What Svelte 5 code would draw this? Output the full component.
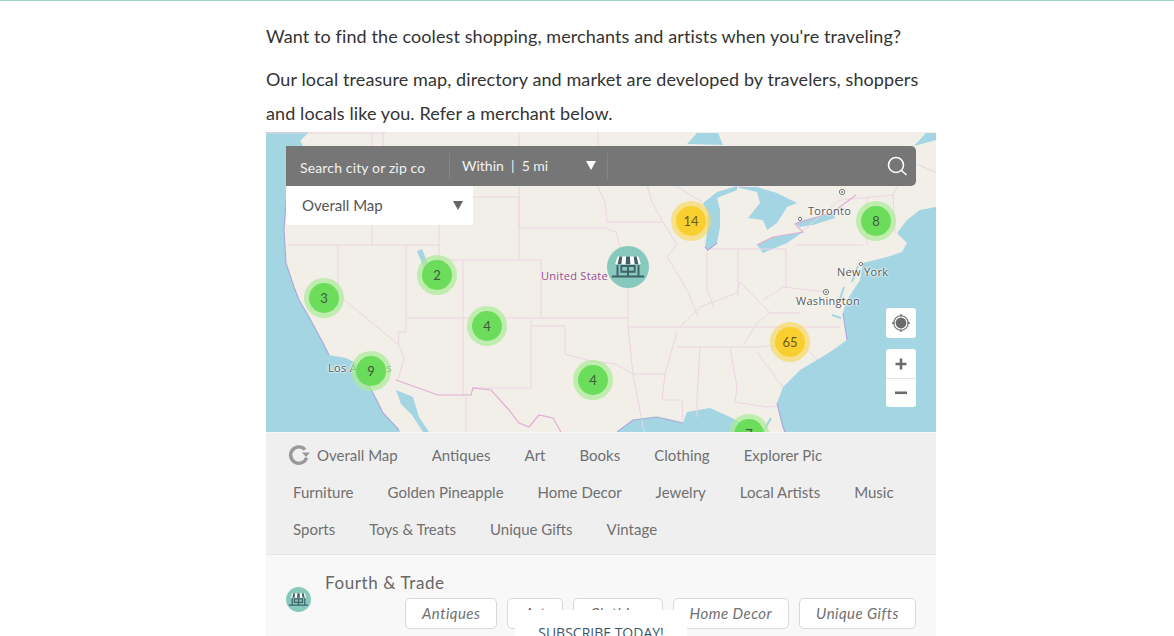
<script>
  const row1 = ['Antiques', 'Art', 'Books', 'Clothing', 'Explorer Pic'];
  const row2 = ['Furniture', 'Golden Pineapple', 'Home Decor', 'Jewelry', 'Local Artists', 'Music'];
  const row3 = ['Sports', 'Toys & Treats', 'Unique Gifts', 'Vintage'];
  const tags = ['Antiques', 'Art', 'Clothing', 'Home Decor', 'Unique Gifts'];
  const clusters = [
    { x: 58, y: 166, n: '3', c: 'g' },
    { x: 171, y: 143, n: '2', c: 'g' },
    { x: 221, y: 194, n: '4', c: 'g' },
    { x: 105, y: 239, n: '9', c: 'g' },
    { x: 327, y: 248, n: '4', c: 'g' },
    { x: 425, y: 89, n: '14', c: 'y' },
    { x: 610, y: 89, n: '8', c: 'g' },
    { x: 524, y: 210, n: '65', c: 'y' },
    { x: 483, y: 302, n: '7', c: 'g' }
  ];
  const labels = [
    { x: 275, y: 137, t: 'United State', k: 'purple' },
    { x: 542, y: 72, t: 'Toronto', k: 'city' },
    { x: 571, y: 133, t: 'New York', k: 'city' },
    { x: 530, y: 162, t: 'Washington', k: 'city' },
    { x: 62, y: 229, t: 'Los Angeles', k: 'city' }
  ];
  const borders = [
    'M0 1 H120', 'M106 0 V113', 'M117 0 V14', 'M22 113 H173', 'M72 113 V163 L133 213 L138 226 L133 245 L130 248',
    'M140 113 V200 H132 L133 213', 'M197 128 V265', 'M173 65 V128 H275 V186', 'M140 186 H362',
    'M265 186 V256 H207', 'M265 194 H299 V222 L320 228 L350 232 L367 242 H399',
    'M150 65 H253 V128', 'M253 0 V96 H340 L350 100 L362 148 V195', 'M332 0 V55 L339 70 L341 90 H397',
    'M339 53 H381 L386 70 L397 90 L411 113 L401 125 L411 141 L422 160 L432 185', 'M200 265 V300',
    'M361 195 H574', 'M411 215 H494', 'M362 195 L367 242 L371 263 L378 300',
    'M411 200 L399 242 L396 268 H416 L417 290', 'M434 215 L431 268 L431 285',
    'M464 216 L471 255 L469 270 L501 275 L512 274', 'M491 220 L517 255', 'M494 215 L534 210 L551 228',
    'M414 195 L424 185 L434 175 L471 161', 'M504 181 L491 191 L477 213', 'M471 161 L474 150 L504 181 L534 181',
    'M497 168 L517 155 L560 160', 'M442 117 H520 V155', 'M441 117 V158 L448 175', 'M472 118 V165',
    'M529 113 H597', 'M601 65 V113', 'M574 68 L627 63 L629 101', 'M534 101 L574 68',
    'M381 55 L395 45 L436 70', 'M472 55 L512 50', 'M627 63 L640 40 L650 20', 'M645 30 L670 40'
  ];
</script>

<div class="page">
  <main class="content">
    <p class="intro first">Want to find the coolest shopping, merchants and artists when you're traveling?</p>
    <p class="intro">Our local treasure map, directory and market are developed by travelers, shoppers and locals like you. Refer a merchant below.</p>

    <section class="map">
      <svg class="base" width="670" height="300" viewBox="0 0 670 300">
        <rect width="670" height="300" fill="#f2efe9" />
        <g fill="#a3d5e3">
          <path d="M0 0 H43 L33 10 L37 22 L25 45 L20 70 L18 98 L20 131 L28 155 L33 168 L43 185 L57 211 L63 223 L80 226 L90 231 L100 248 L107 261 L117 281 L133 298 L134 300 H0 Z" />
          <path d="M130 258 L147 265 L153 285 L163 300 H157 L146 283 L135 272 Z" />
          <path d="M670 75 L654 78 L641 88 L631 101 L641 111 L636 120 L621 125 L597 131 L594 148 L581 168 L577 181 L581 208 L567 218 L551 228 L534 238 L517 255 L511 271 L517 295 L519 300 H670 Z" />
          <path d="M351 300 L367 288 L391 285 L417 291 L421 280 L444 276 L464 285 L491 300 Z" />
          <path d="M648 14 L660 1 H670 V8 Z" />
          <path d="M421 12 L431 1 H452 L457 13 Z" />
          <path d="M471 54 L451 60 L437 71 L442 81 L441 100 L439 115 L442 118 L451 111 L454 95 L454 78 L451 66 L471 58 Z" />
          <path d="M470 55 H491 L511 61 L531 71 L521 75 L511 91 L501 98 L497 88 L482 86 L494 71 L491 60 Z" />
          <path d="M491 113 L507 105 L537 100 L521 111 L497 121 Z" />
          <path d="M529 91 L537 88 L567 81 L569 86 L547 93 L534 95 Z" />
          <path d="M151 119 L156 117 L162 132 L158 136 Z" />
        </g>
        <g fill="none" stroke="#a3d5e3" stroke-width="2">
          <path d="M566 183 L575 186 M573 170 L578 155 M586 150 L592 134 M30 3 L38 18 M505 286 L497 300" />
        </g>
        <g fill="none" stroke="#eed3e4" stroke-width="1">
          {#each borders as d}<path {d} />{/each}
        </g>
        <path fill="none" stroke="#a9a8d8" stroke-width="1.1" d="M25 45 L20 70 L18 98 L20 131 L28 155 L33 168 L43 185 L57 211 L63 223 M100 248 L107 261 L117 281 L133 298 M351 300 L367 288 L391 285 L417 291 M511 271 L517 295 L519 300 M577 181 L581 208 M439 115 L442 118 L451 111" />
        <path fill="none" stroke="#dfaed2" stroke-width="1.2" d="M130 248 L172 263 H205 L207 256 L225 258 L243 278 L253 291 L263 295 L273 283 L287 286 L295 300 M491 113 L507 105 L537 100 L529 92 L567 80 L590 63" />
        <g fill="#fff" stroke="#777">
          <circle cx="576" cy="60" r="2.6" /><circle cx="560" cy="160" r="2.6" /><circle cx="534" cy="87" r="1.6" /><circle cx="595" cy="132" r="1.6" />
        </g>
        <circle cx="576" cy="60" r="1" fill="#777" /><circle cx="560" cy="160" r="1" fill="#777" />
      </svg>

      {#each labels as l}
        <span class="label {l.k}" style="left:{l.x}px;top:{l.y}px">{l.t}</span>
      {/each}

      {#each clusters as k}
        <div class="cluster {k.c}" style="left:{k.x}px;top:{k.y}px"><span>{k.n}</span></div>
      {/each}

      <div class="store big">
        <svg viewBox="0 0 44 44" width="42" height="42">
          <path fill="#fff" d="M11 11 H33 L35.5 19 H8.5 Z" />
          <path fill="#3f6269" d="M13 11 H16 L15 19 H11 Z M20 11 H24 L24.5 19 H19.5 Z M28 11 H31 L33 19 H29 Z" />
          <path fill="none" stroke="#3f6269" stroke-width="2" d="M11 20 V31 M33 20 V31 M5 32 H39 M15 21 H29 V27 H15 Z M22 21 V31" />
        </svg>
      </div>

      <div class="searchbar">
        <span class="search">Search city or zip co</span>
        <span class="within">Within &nbsp;|&nbsp; 5 mi</span>
        <i class="tri white"></i>
        <span class="sep"></span>
        <svg class="glass" width="22" height="22" viewBox="0 0 22 22" fill="none" stroke="#fff" stroke-width="1.6">
          <circle cx="10" cy="10" r="7.5" /><path d="M15.5 15.5 L20.5 20" />
        </svg>
      </div>

      <div class="select"><span>Overall Map</span><i class="tri grey"></i></div>

      <button class="ctl locate" aria-label="Locate">
        <svg width="20" height="20" viewBox="0 0 20 20">
          <circle cx="10" cy="10" r="5.4" fill="#6b6b6b" />
          <circle cx="10" cy="10" r="7.2" fill="none" stroke="#6b6b6b" stroke-width="1.1" />
          <path stroke="#6b6b6b" stroke-width="1.4" d="M10 1 V3.5 M10 16.5 V19 M1 10 H3.5 M16.5 10 H19" />
        </svg>
      </button>
      <div class="ctl zoom">
        <div class="zbtn"><svg width="12" height="12" viewBox="0 0 12 12"><path fill="#6b6b6b" d="M4.7 0.5 H7.3 V4.7 H11.5 V7.3 H7.3 V11.5 H4.7 V7.3 H0.5 V4.7 H4.7 Z" /></svg></div>
        <div class="zbtn"><svg width="12" height="4" viewBox="0 0 12 4"><rect y="0.5" width="12" height="2.6" fill="#6b6b6b" /></svg></div>
      </div>
    </section>

    <nav class="cats">
      <div class="cat-row">
        <a class="cat overall" href="#top">
          <svg width="22" height="22" viewBox="0 0 22 22" fill="none">
            <path d="M18.6 13.8 A8.2 8.2 0 1 1 17 5.6" stroke="#999" stroke-width="3.4" />
            <path d="M14 8.5 H22 L18 13 Z" fill="#999" />
          </svg>
          Overall Map
        </a>
        {#each row1 as c}<a class="cat" href="#top">{c}</a>{/each}
      </div>
      <div class="cat-row">{#each row2 as c}<a class="cat" href="#top">{c}</a>{/each}</div>
      <div class="cat-row">{#each row3 as c}<a class="cat" href="#top">{c}</a>{/each}</div>
    </nav>

    <article class="merchant">
      <div class="store small">
        <svg viewBox="0 0 44 44" width="25" height="25">
          <path fill="#fff" d="M11 11 H33 L35.5 19 H8.5 Z" />
          <path fill="#3f6269" d="M13 11 H16 L15 19 H11 Z M20 11 H24 L24.5 19 H19.5 Z M28 11 H31 L33 19 H29 Z" />
          <path fill="none" stroke="#3f6269" stroke-width="2.2" d="M11 20 V31 M33 20 V31 M5 32 H39 M15 21 H29 V27 H15 Z M22 21 V31" />
        </svg>
      </div>
      <div class="m-body">
        <h3>Fourth &amp; Trade</h3>
        <div class="tags">{#each tags as t}<span class="tag">{t}</span>{/each}</div>
      </div>
    </article>
  </main>
  <div class="subscribe">SUBSCRIBE TODAY!</div>
</div>

<style>
  :global(body) { margin: 0; background: #fff; overflow: hidden; }
  .page {
    height: 636px; overflow: hidden; position: relative;
    border-top: 1px solid #9fd3c4; box-sizing: border-box;
    font-family: Lato, "Open Sans", sans-serif; color: #333;
  }
  .content { width: 670px; margin: 0 auto 0 266px; padding-top: 18px; }
  .intro { margin: 0; font-size: 18px; line-height: 34px; color: #333; letter-spacing: .1px; }
  .intro.first { margin-bottom: 9px; }
  .intro:nth-child(2) { margin-bottom: 2px; }
  .map { position: relative; width: 670px; height: 300px; overflow: hidden; }
  .base { display: block; filter: blur(.35px); }
  .label { position: absolute; font-size: 11px; line-height: 14px; white-space: nowrap; font-family: "Open Sans", sans-serif; letter-spacing: .3px; }
  .purple { color: #9a4d96; font-size: 11px; }
  .city { color: #555; text-shadow: 0 0 2px #fff, 0 0 2px #fff, 0 0 3px #fff; }
  .cluster {
    position: absolute; width: 40px; height: 40px; margin: -20px 0 0 -20px; border-radius: 50%;
    display: flex; align-items: center; justify-content: center;
  }
  .cluster span {
    width: 30px; height: 30px; border-radius: 50%; display: flex; align-items: center; justify-content: center;
    font-size: 13px; color: #3d5a3a;
  }
  .cluster.g { background: rgba(170, 235, 150, .7); }
  .cluster.g span { background: rgba(100, 220, 85, .93); }
  .cluster.y { background: rgba(248, 215, 90, .65); }
  .cluster.y span { background: #f8cf2f; color: #6b5a18; }
  .store { background: #87cabd; border-radius: 50%; display: flex; align-items: center; justify-content: center; }
  .store.big { position: absolute; left: 341px; top: 114px; width: 42px; height: 42px; }
  .store.small { width: 25px; height: 25px; flex: none; margin-top: 32px; }
  .searchbar {
    position: absolute; left: 20px; top: 14px; width: 630px; height: 40px; background: #767676;
    border-radius: 0 5px 5px 0; display: flex; align-items: center; color: #f2f2f2; font-size: 14px;
  }
  .search { flex: none; width: 149px; height: 24px; padding: 2px 0 0 14px; border-right: 1px solid #858585; line-height: 26px; letter-spacing: .15px; }
  .within { padding-left: 12px; width: 124px; flex: none; margin-top: -2px; }
  .sep { width: 1px; height: 26px; background: #858585; margin-left: 10px; }
  .glass { margin-left: auto; margin-right: 8px; }
  .tri { display: block; width: 0; height: 0; border-left: 5.5px solid transparent; border-right: 5.5px solid transparent; }
  .tri.white { border-top: 9px solid #fff; margin-top: -2px; margin-right: 1px; flex: none; }
  .tri.grey { border-top: 9px solid #666; margin-top: 2px; }
  .select {
    position: absolute; left: 20px; top: 54px; width: 187px; height: 39px; background: #fff; border-radius: 0 0 0 3px;
    display: flex; align-items: center; justify-content: space-between; padding: 0 10px 2px 16px; box-sizing: border-box;
    font-size: 15px; color: #555;
  }
  .ctl { position: absolute; background: #fff; border: 0; border-radius: 3px; padding: 0; }
  .locate { left: 620px; top: 176px; width: 30px; height: 30px; display: flex; align-items: center; justify-content: center; }
  .zoom { left: 620px; top: 217px; width: 30px; height: 58px; }
  .zbtn { height: 28px; display: flex; align-items: center; justify-content: center; }
  .zbtn:first-child { height: 30px; border-bottom: 1px solid #e4e4e4; box-sizing: border-box; }
  .cats { background: #efefef; padding: 3px 27px 7px; border-top: 1px solid #f7f7f7; border-bottom: 1px solid #e4e4e4; }
  .cat-row { display: flex; gap: 34px; height: 37px; align-items: center; }
  .cat { font-size: 15px; color: #707070; text-decoration: none; white-space: nowrap; }
  .overall { display: flex; align-items: center; gap: 7px; margin-left: -5px; }
  .merchant { background: #f8f8f8; height: 90px; display: flex; padding: 0 20px; gap: 14px; }
  .m-body { flex: 1; padding-top: 16px; min-width: 0; }
  h3 { margin: 0; font-weight: 400; font-size: 17px; line-height: 24px; color: #666; letter-spacing: .6px; }
  .tags { display: flex; justify-content: flex-end; gap: 10px; margin-top: 3px; }
  .tag {
    border: 1px solid #d8d8d8; border-radius: 5px; background: #fff; height: 29px; padding: 0 16px; line-height: 29px;
    font-style: italic; font-size: 15px; color: #707070; letter-spacing: .45px;
  }
  .subscribe {
    position: absolute; left: 515px; top: 609px; width: 172px; height: 40px; background: #fff; border-radius: 3px 3px 0 0; text-align: center;
    font-size: 14px; line-height: 18px; color: #3d5566; padding-top: 14px; box-sizing: border-box; font-family: "Open Sans", sans-serif;
  }
</style>
